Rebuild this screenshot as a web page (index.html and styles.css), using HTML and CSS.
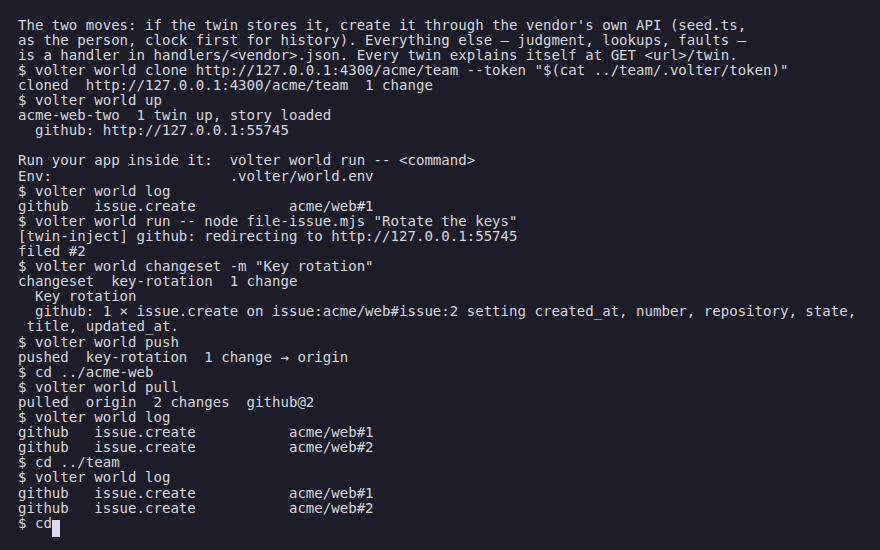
FILE: index.html
```html
<!DOCTYPE html>
<html>
<head>
<meta charset="utf-8">
<link rel="stylesheet" href="styles.css">
</head>
<body>
<main class="terminal"><pre class="output">The two moves: if the twin stores it, create it through the vendor's own API (seed.ts,
as the person, clock first for history). Everything else — judgment, lookups, faults —
is a handler in handlers/&lt;vendor&gt;.json. Every twin explains itself at GET &lt;url&gt;/twin.
$ volter world clone http://127.0.0.1:4300/acme/team --token "$(cat ../team/.volter/token)"
cloned  http://127.0.0.1:4300/acme/team  1 change
$ volter world up
acme-web-two  1 twin up, story loaded
  github: http://127.0.0.1:55745

Run your app inside it:  volter world run -- &lt;command&gt;
Env:                     .volter/world.env
$ volter world log
github   issue.create           acme/web#1
$ volter world run -- node file-issue.mjs "Rotate the keys"
[twin-inject] github: redirecting to http://127.0.0.1:55745
filed #2
$ volter world changeset -m "Key rotation"
changeset  key-rotation  1 change
  Key rotation
  github: 1 × issue.create on issue:acme/web#issue:2 setting created_at, number, repository, state,
 title, updated_at.
$ volter world push
pushed  key-rotation  1 change → origin
$ cd ../acme-web
$ volter world pull
pulled  origin  2 changes  github@2
$ volter world log
github   issue.create           acme/web#1
github   issue.create           acme/web#2
$ cd ../team
$ volter world log
github   issue.create           acme/web#1
github   issue.create           acme/web#2
$ cd<span class="cursor"> </span></pre></main>
</body>
</html>
```
FILE: styles.css
```css
html, body {
  margin: 0;
  padding: 0;
  background: #1d1d29;
  height: 100%;
  overflow: hidden;
}
.terminal {
  padding: 17.6px 0 0 18px;
}
.output {
  margin: 0;
  font-family: "DejaVu Sans Mono", "Liberation Mono", monospace;
  font-size: 14.07px;
  line-height: 15.1px;
  color: #d6d6de;
  white-space: pre;
}
.cursor {
  display: inline-block;
  width: 8px;
  height: 17px;
  vertical-align: -4px;
  background: #d9d9ef;
}
```
